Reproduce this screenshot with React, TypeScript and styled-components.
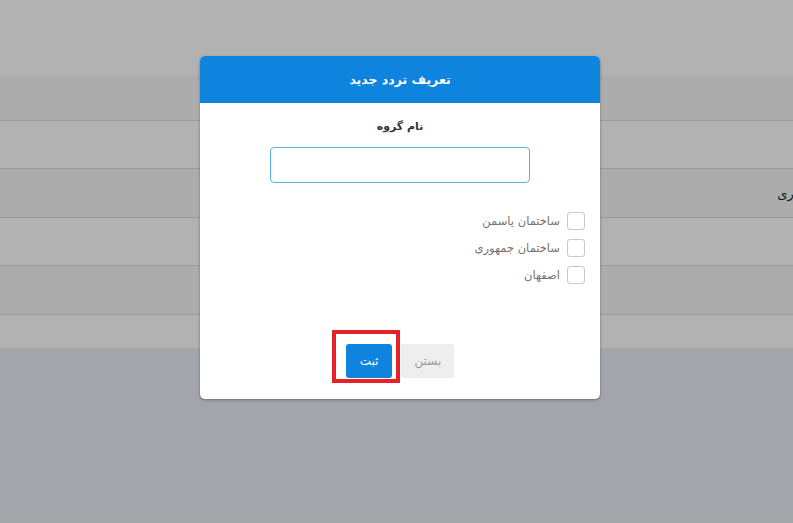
import React from 'react';
import styled, { createGlobalStyle } from 'styled-components';

const GlobalStyle = createGlobalStyle`
  html, body {
    margin: 0;
    padding: 0;
    height: 100%;
    overflow: hidden;
    background: #e9ecef;
    font-family: "DejaVu Sans", "Liberation Sans", sans-serif;
  }
  #root {
    height: 100%;
  }
`;

const Page = styled.div`
  position: relative;
  height: 523px;
  width: 793px;
  overflow: hidden;
  background: #e9edf2;
`;

const TopBar = styled.div`
  height: 75px;
  background: #ffffff;
`;

const Table = styled.div`
  width: 888px;
  background: #ffffff;
`;

const Row = styled.div<{ striped: boolean; h: number }>`
  display: flex;
  justify-content: flex-end;
  align-items: center;
  height: ${(p) => p.h}px;
  box-sizing: border-box;
  border-top: 1px solid #dcdcdc;
  background: ${(p) => (p.striped ? '#f7f7f7' : '#ffffff')};
  &:first-child {
    border-top: none;
  }
`;

const Cell = styled.div`
  direction: rtl;
  padding: 0 14px;
  font-size: 13px;
  color: #222;
`;

const Backdrop = styled.div`
  position: absolute;
  inset: 0;
  background: rgba(0, 0, 0, 0.3);
`;

const Modal = styled.div`
  position: absolute;
  top: 56px;
  left: 200px;
  width: 400px;
  background: #ffffff;
  border-radius: 5px;
  box-shadow: 0 1px 3px rgba(0, 0, 0, 0.35);
  direction: rtl;
`;

const ModalHeader = styled.div`
  height: 47px;
  display: flex;
  align-items: center;
  justify-content: center;
  background: #0e84de;
  color: #ffffff;
  font-size: 12.5px;
  font-weight: bold;
  border-radius: 5px 5px 0 0;
`;

const ModalBody = styled.div`
  display: flex;
  flex-direction: column;
  align-items: center;
  padding: 16px 15px 0;
`;

const FieldLabel = styled.div`
  font-size: 11px;
  font-weight: bold;
  color: #333;
  line-height: 16px;
`;

const TextInput = styled.input`
  margin-top: 12px;
  width: 260px;
  height: 36px;
  box-sizing: border-box;
  border: 1px solid #5caef0;
  border-radius: 4px;
  outline: none;
`;

const CheckList = styled.div`
  align-self: stretch;
  display: flex;
  flex-direction: column;
  gap: 9px;
  margin-top: 29px;
`;

const CheckItem = styled.label`
  display: flex;
  align-items: center;
  gap: 7px;
  font-size: 11.5px;
  color: #7a726e;
`;

const Box = styled.span`
  width: 18px;
  height: 18px;
  box-sizing: border-box;
  border: 1px solid #c8c8c8;
  border-radius: 3px;
  background: #fff;
`;

const Footer = styled.div`
  display: flex;
  justify-content: center;
  gap: 9px;
  margin-top: 60px;
  padding-bottom: 21px;
`;

const Button = styled.button<{ primary?: boolean }>`
  position: relative;
  height: 34px;
  padding: 0 ${(p) => (p.primary ? '14px' : '13px')};
  border: none;
  border-radius: 3px;
  font-family: inherit;
  font-size: 12px;
  background: ${(p) => (p.primary ? '#0e84de' : '#eeeeee')};
  color: ${(p) => (p.primary ? '#ffffff' : '#999999')};
`;

const Highlight = styled.span`
  position: absolute;
  top: -14px;
  right: -8px;
  bottom: -5px;
  left: -14px;
  border: 4px solid #e8202a;
  pointer-events: none;
`;

const rows = [
  { h: 45, striped: true, text: '' },
  { h: 48, striped: false, text: '' },
  { h: 49, striped: true, text: 'ساختمان جمهوری' },
  { h: 48, striped: false, text: '' },
  { h: 49, striped: true, text: '' },
  { h: 34, striped: false, text: '' },
];

const options = ['ساختمان یاسمن', 'ساختمان جمهوری', 'اصفهان'];

const App: React.FC = () => (
  <Page>
    <GlobalStyle />
    <TopBar />
    <Table>
      {rows.map((r, i) => (
        <Row key={i} h={r.h} striped={r.striped}>
          <Cell>{r.text}</Cell>
        </Row>
      ))}
    </Table>
    <Backdrop />
    <Modal>
      <ModalHeader>تعریف تردد جدید</ModalHeader>
      <ModalBody>
        <FieldLabel>نام گروه</FieldLabel>
        <TextInput />
        <CheckList>
          {options.map((o) => (
            <CheckItem key={o}>
              <Box />
              {o}
            </CheckItem>
          ))}
        </CheckList>
      </ModalBody>
      <Footer>
        <Button>بستن</Button>
        <Button primary>
          ثبت
          <Highlight />
        </Button>
      </Footer>
    </Modal>
  </Page>
);

export default App;
